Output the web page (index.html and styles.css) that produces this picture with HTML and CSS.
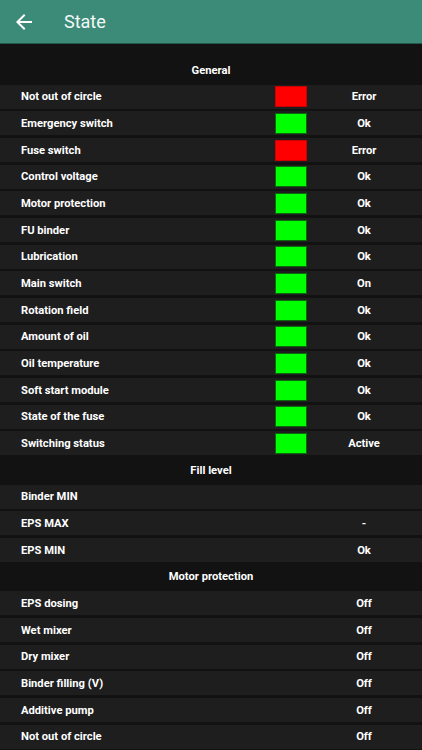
FILE: index.html
```html
<!DOCTYPE html>
<html>
<head>
<meta charset="utf-8">
<link rel="stylesheet" href="styles.css">
</head>
<body>
<header class="appbar">
  <svg class="back" viewBox="0 0 24 24" width="24" height="24"><path fill="#fff" d="M20 11H7.83l5.59-5.59L12 4l-8 8 8 8 1.41-1.41L7.83 13H20v-2z"/></svg>
  <span class="title">State</span>
</header>
<main class="list">
  <div class="section">General</div>
  <div class="row"><span class="label">Not out of circle</span><span class="ind red"></span><span class="val">Error</span></div>
  <div class="row"><span class="label">Emergency switch</span><span class="ind green"></span><span class="val">Ok</span></div>
  <div class="row"><span class="label">Fuse switch</span><span class="ind red"></span><span class="val">Error</span></div>
  <div class="row"><span class="label">Control voltage</span><span class="ind green"></span><span class="val">Ok</span></div>
  <div class="row"><span class="label">Motor protection</span><span class="ind green"></span><span class="val">Ok</span></div>
  <div class="row"><span class="label">FU binder</span><span class="ind green"></span><span class="val">Ok</span></div>
  <div class="row"><span class="label">Lubrication</span><span class="ind green"></span><span class="val">Ok</span></div>
  <div class="row"><span class="label">Main switch</span><span class="ind green"></span><span class="val">On</span></div>
  <div class="row"><span class="label">Rotation field</span><span class="ind green"></span><span class="val">Ok</span></div>
  <div class="row"><span class="label">Amount of oil</span><span class="ind green"></span><span class="val">Ok</span></div>
  <div class="row"><span class="label">Oil temperature</span><span class="ind green"></span><span class="val">Ok</span></div>
  <div class="row"><span class="label">Soft start module</span><span class="ind green"></span><span class="val">Ok</span></div>
  <div class="row"><span class="label">State of the fuse</span><span class="ind green"></span><span class="val">Ok</span></div>
  <div class="row"><span class="label">Switching status</span><span class="ind green"></span><span class="val">Active</span></div>
  <div class="section">Fill level</div>
  <div class="row"><span class="label">Binder MIN</span><span class="ind"></span><span class="val"></span></div>
  <div class="row"><span class="label">EPS MAX</span><span class="ind"></span><span class="val">-</span></div>
  <div class="row"><span class="label">EPS MIN</span><span class="ind"></span><span class="val">Ok</span></div>
  <div class="section">Motor protection</div>
  <div class="row"><span class="label">EPS dosing</span><span class="ind"></span><span class="val">Off</span></div>
  <div class="row"><span class="label">Wet mixer</span><span class="ind"></span><span class="val">Off</span></div>
  <div class="row"><span class="label">Dry mixer</span><span class="ind"></span><span class="val">Off</span></div>
  <div class="row"><span class="label">Binder filling (V)</span><span class="ind"></span><span class="val">Off</span></div>
  <div class="row"><span class="label">Additive pump</span><span class="ind"></span><span class="val">Off</span></div>
  <div class="row"><span class="label">Not out of circle</span><span class="ind"></span><span class="val">Off</span></div>
</main>
</body>
</html>
```
FILE: styles.css
```css
html, body {
  margin: 0;
  padding: 0;
  background: #121212;
  height: 100%;
  overflow: hidden;
}
body {
  font-family: Roboto, "Liberation Sans", sans-serif;
  color: #fff;
}
.appbar {
  height: 44px;
  background: #3b8b78;
  border-bottom: 1px solid #25584c;
  box-sizing: border-box;
  display: flex;
  align-items: center;
  padding-left: 12px;
}
.back {
  display: block;
  flex: none;
}
.title {
  font-size: 18px;
  margin-left: 28px;
  color: #f4f8f6;
}
.list {
  display: flex;
  flex-direction: column;
  gap: 2.68px;
  padding-top: 14px;
}
.section, .row {
  height: 24px;
  flex: none;
  display: flex;
  align-items: center;
  font-size: 11.2px;
  font-weight: 700;
}
.section {
  justify-content: center;
}
.row {
  background: #1e1e1f;
}
.label {
  flex: 1;
  padding-left: 21px;
}
.ind {
  width: 32px;
  height: 21px;
  flex: none;
  box-sizing: border-box;
}
.ind.red {
  background: #ff0000;
  border: 1px solid #c00;
}
.ind.green {
  background: #00ff00;
  border: 1px solid #0a6a0a;
}
.val {
  width: 114px;
  flex: none;
  text-align: center;
  margin-right: 1px;
}
```
